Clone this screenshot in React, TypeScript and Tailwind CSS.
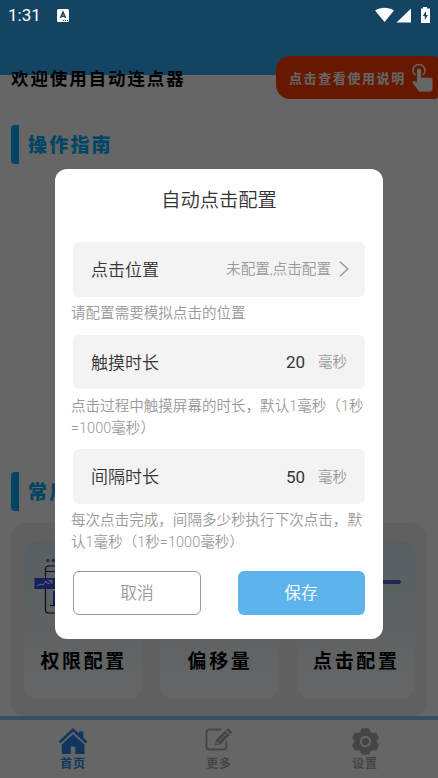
import type { ReactNode } from 'react'

const SHORTCUTS = ['权限配置', '偏移量', '点击配置']

interface DurationField {
  label: string
  value: string
  hint: string
}

const DURATION_FIELDS: DurationField[] = [
  { label: '触摸时长', value: '20', hint: '点击过程中触摸屏幕的时长，默认1毫秒（1秒=1000毫秒）' },
  { label: '间隔时长', value: '50', hint: '每次点击完成，间隔多少秒执行下次点击，默认1毫秒（1秒=1000毫秒）' },
]

function StatusBar() {
  return (
    <div className="flex h-[30px] items-center justify-between px-2 text-white">
      <div className="flex items-center">
        <span className="w-[49px] text-[17px] leading-[30px]">1:31</span>
        <svg className="h-[13px] w-3" viewBox="0 0 12 13">
          <rect width="12" height="13" rx="1.5" fill="#fff" />
          <path d="M3.4 9 L6 3.2 L8.6 9 M4.3 7.2 H7.7" fill="none" stroke="#144463" strokeWidth="1.5" />
          <path d="M6 11.5h1M8 11.5h1M10 11.5h1" stroke="#144463" strokeWidth="1" />
        </svg>
      </div>
      <svg className="h-4 w-[55px]" viewBox="0 0 55 16" fill="#fff">
        <path d="M0 3.5C5.5-.3 13.5-.3 19 3.5L9.5 15z" />
        <path d="M36 1.5v14H21.5z" />
        <path d="M48 1.5V0h4v1.5h3V16h-9V1.5z" />
        <path d="M51 4l-3.2 5h2v4l3.2-5h-2z" fill="#144463" />
      </svg>
    </div>
  )
}

function SectionTitle({ children }: { children: ReactNode }) {
  return (
    <div className="ml-[11px] flex h-[39px] items-center">
      <div className="h-[39px] w-2 rounded-l bg-[#00b0fa]" />
      <h2 className="ml-[9px] pt-[3px] text-[19px] font-black tracking-[2.2px] text-[#00b0fa]">{children}</h2>
    </div>
  )
}

function TapIcon() {
  return (
    <svg className="h-[29px] w-[21px]" viewBox="0 0 21 29">
      <path d="M3.4 12.2A6 6 0 1 1 10.8 12" fill="none" stroke="#fff" strokeWidth="1.5" />
      <path
        d="M5 7.5a2 2 0 0 1 4 0V15l1.5-.8 1.5 1 1.5-1 1.5 1 1.5-1 1.5 1 1.5-.5L20.5 16v10.5L19 28.5H7L1 20.5l-.5-2 1.5-.8 3 1.8z"
        fill="#fff"
      />
    </svg>
  )
}

function PhoneArt() {
  return (
    <svg className="absolute left-[10px] top-[17px] h-[60px] w-[60px]" viewBox="0 0 60 60" fill="none">
      <circle cx="14" cy="2.5" r="1.7" fill="#ff4b20" />
      <circle cx="19.5" cy="2.5" r="1.7" fill="#3b63ff" />
      <rect x="11.5" y="8" width="38" height="47" rx="3" stroke="#222" strokeWidth="1.2" />
      <path d="M11.5 13.5H49" stroke="#222" />
      <path d="M19 33h6v14h-6z" fill="#2c4be0" />
      <path d="M16 47.5h20" stroke="#222" strokeWidth="1.2" />
      <path d="M.5 20H22v11H.5z" fill="#3653e8" />
      <path d="M3 28l4-2 2 1 3-4 2 3 4-4M14.5 22.5H18V26" stroke="#fff" />
    </svg>
  )
}

function ShortcutCard({ label, index }: { label: string; index: number }) {
  return (
    <div className="relative flex h-[158px] flex-1 flex-col items-center justify-end rounded-[14px] bg-linear-to-b from-[#dcedf6] to-[#fbfcfd]">
      {index === 0 && <PhoneArt />}
      {index === 2 && <div className="absolute right-[14px] top-[39px] h-1 w-10 rounded-full bg-[#4f66cf]" />}
      <span className="mb-[23px] pl-px text-[19px] font-bold leading-7 tracking-[2.6px] text-black">{label}</span>
    </div>
  )
}

function HomeIcon() {
  return (
    <svg className="h-[26px] w-7" viewBox="0 0 28 26" fill="#2688ee">
      <path d="M1.5 13.5L14 1.8l12.5 11.7" fill="none" stroke="#2688ee" strokeWidth="2.6" strokeLinecap="round" />
      <path d="M20 3.5h4.3V11L20 7zM2.8 16.5L14 6.3l11.5 10.2V26h-9.2v-7.5h-4.5V26h-9z" />
    </svg>
  )
}

function EditIcon() {
  return (
    <svg className="h-[26px] w-7" viewBox="0 0 28 26" fill="none">
      <path d="M16.5 1.5h-12a3 3 0 0 0-3 3v14a3 3 0 0 0 3 3h14a3 3 0 0 0 3-3V13" stroke="#acacac" strokeWidth="1.8" />
      <path d="M10 17.5l1-5.5 9-9.2 4.5 4.5-9 9.2z" fill="#acacac" />
      <path d="M21 1.8L22.8 0l4.5 4.5-1.8 1.8z" fill="#acacac" />
      <path d="M13.5 13.5l8-8M11.5 16l.6-2.2 1.7 1.7z" stroke="#fff" strokeWidth=".9" />
    </svg>
  )
}

function GearIcon() {
  return (
    <svg className="h-[27px] w-[27px]" viewBox="0 0 27 27" fill="#acacac" stroke="#acacac" strokeLinejoin="round">
      <path
        d="M10.3 1h6.4l1.3 3.3 2.5 1.5 3.5-.6L26 10l-2 2.3v2.4l2 2.3-2 4.800-3.500-.6-2.500 1.500-1.300 3.300h-6.400L9 22.700l-2.500-1.500-3.500.6L1 17l2-2.300v-2.400L1 10l2-4.800 3.500.6L9 4.300z"
        strokeWidth="1.5"
      />
      <circle cx="13.5" cy="13.5" r="4.7" stroke="#fff" strokeWidth="2" />
    </svg>
  )
}

function Tab({ icon, label, active = false }: { icon: ReactNode; label: string; active?: boolean }) {
  return (
    <div className={`flex w-[146px] flex-col items-center pt-2 ${active ? 'text-[#2688ee]' : 'text-[#acacac]'}`}>
      <div className="h-7">{icon}</div>
      <span className="text-[12px] font-bold leading-[17px] tracking-[0.8px]">{label}</span>
    </div>
  )
}

function HomePage() {
  return (
    <div className="flex h-full flex-col bg-linear-to-b from-[#32aaf7] from-[75px] to-white to-[75px]">
      <div className="flex h-[125px] items-start justify-between pt-14">
        <h1 className="ml-[11px] mt-[9px] text-[17.5px] font-bold leading-7 tracking-[1.9px] text-black">欢迎使用自动连点器</h1>
        <div className="flex h-[43px] w-[162px] items-center rounded-l-[14px] rounded-r-[3px] bg-[#ff4000] pl-[13px] text-white">
          <span className="w-[123px] whitespace-nowrap pt-0.5 text-[13px] font-bold tracking-[1.6px]">点击查看使用说明</span>
          <TapIcon />
        </div>
      </div>
      <SectionTitle>操作指南</SectionTitle>
      <div className="h-[308px]" />
      <SectionTitle>常用</SectionTitle>
      <div className="mx-[11px] mt-3 flex h-[193px] gap-[18px] rounded-[14px] bg-[#f0f0f0] pl-[13px] pr-3 pt-[18px]">
        {SHORTCUTS.map((label, index) => (
          <ShortcutCard key={label} label={label} index={index} />
        ))}
      </div>
      <nav className="flex flex-1 border-t-4 border-[#7dcaf5] bg-white">
        <Tab icon={<HomeIcon />} label="首页" active />
        <Tab icon={<EditIcon />} label="更多" />
        <Tab icon={<GearIcon />} label="设置" />
      </nav>
    </div>
  )
}

function Hint({ children }: { children: ReactNode }) {
  return <p className="-ml-0.5 mb-[9.5px] mt-[6.5px] w-[298px] text-[14.55px] leading-[22px] text-[#999]">{children}</p>
}

function ConfigDialog() {
  return (
    <div className="absolute left-[55px] top-[169px] flex h-[470px] w-[328px] flex-col rounded-[12px] bg-white px-[18px] font-[350]">
      <h3 className="mt-[18px] text-center text-[19.3px] leading-7 text-[#333]">自动点击配置</h3>
      <div className="mt-[27px] flex h-[54.5px] items-center rounded-md bg-[#f3f3f3] pl-[18px] pr-4 text-[#333]">
        <span className="flex-1 pt-0.5 text-[17px]">点击位置</span>
        <span className="pt-0.5 text-[14.6px] text-[#999]">未配置,点击配置</span>
        <svg className="ml-2 h-4 w-[10px]" viewBox="0 0 10 16" fill="none">
          <path d="M1 .7L8.8 8 1 15.3" stroke="#999" strokeWidth="1.5" />
        </svg>
      </div>
      <Hint>请配置需要模拟点击的位置</Hint>
      {DURATION_FIELDS.map((field) => (
        <div key={field.label}>
          <div className="flex h-[54.5px] items-center rounded-md bg-[#f3f3f3] px-[18px] text-[#333]">
            <span className="flex-1 pt-[3px] text-[17px]">{field.label}</span>
            <span className="pt-0.5 text-[17px] font-normal">{field.value}</span>
            <span className="ml-[13px] pt-[3px] text-[14.5px] text-[#999]">毫秒</span>
          </div>
          <Hint>{field.hint}</Hint>
        </div>
      ))}
      <div className="mt-[7px] flex justify-between text-[16.7px]">
        <button className="h-[44.5px] w-32 rounded-md border border-[#999] pt-0.5 text-[#999]">取消</button>
        <button className="h-11 w-[127px] rounded-md bg-[#5db3ec] pt-0.5 pr-px text-white">保存</button>
      </div>
    </div>
  )
}

export default function App() {
  return (
    <div className="relative h-[778px] w-[438px] overflow-hidden font-[Roboto,'Noto_Sans_CJK_SC',sans-serif]">
      <HomePage />
      <div className="absolute inset-0 bg-black/60" />
      <div className="absolute inset-x-0 top-0">
        <StatusBar />
      </div>
      <ConfigDialog />
    </div>
  )
}
